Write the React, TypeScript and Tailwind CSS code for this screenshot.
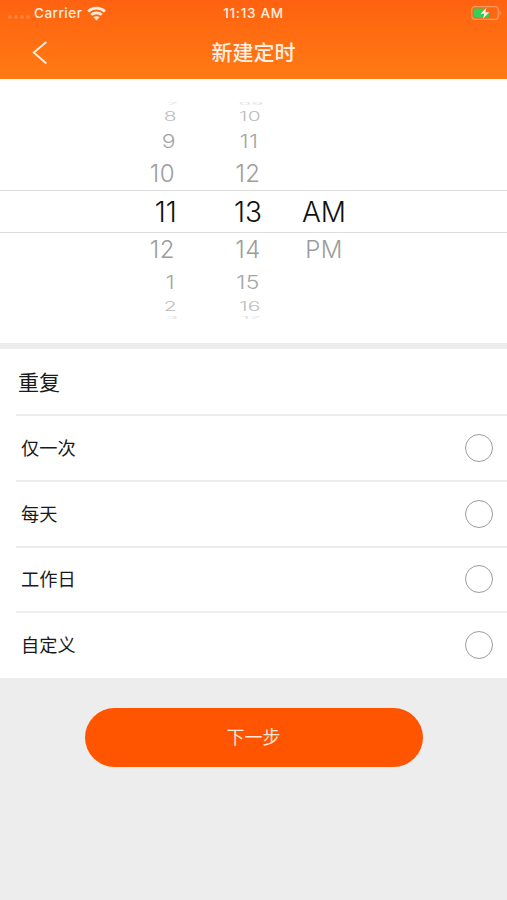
import React, { useState } from 'react';

interface WheelRow {
  hour: string;
  minute: string;
  period?: string;
  row: string;
  text: string;
}

const wheelRows: WheelRow[] = [
  { hour: '7', minute: '09', row: 'h-[7px] pl-[3px]', text: 'text-[20px] text-[#e2e2e2] scale-y-[0.2]' },
  { hour: '8', minute: '10', row: 'h-[19px] pl-[2px]', text: 'text-[21px] text-[#bcbcbc] scale-y-[0.6] tracking-[0.3px] font-light' },
  { hour: '9', minute: '11', row: 'h-[31px] pl-px', text: 'text-[23px] text-[#a6a6a6] scale-y-[0.84] tracking-[0.4px] font-light' },
  { hour: '10', minute: '12', row: 'h-[33px]', text: 'text-[24px] text-[#9c9c9c] tracking-[0.5px] font-light' },
  { hour: '11', minute: '13', period: 'AM', row: 'h-[43px] border-y border-[#dcdcdc] pt-px', text: 'text-[28px] text-[#111111] tracking-[0.1px] font-light' },
  { hour: '12', minute: '14', period: 'PM', row: 'h-[33px]', text: 'text-[24px] text-[#9c9c9c] tracking-[0.5px] font-light' },
  { hour: '1', minute: '15', row: 'h-[33px]', text: 'text-[23px] text-[#a6a6a6] scale-y-[0.84] tracking-[0.4px] font-light' },
  { hour: '2', minute: '16', row: 'h-[15px] pl-[2px]', text: 'text-[21px] text-[#bcbcbc] scale-y-[0.6] tracking-[0.3px] font-light' },
  { hour: '3', minute: '17', row: 'h-[7px] pl-[3px]', text: 'text-[20px] text-[#e2e2e2] scale-y-[0.2]' },
];

const repeatOptions = ['仅一次', '每天', '工作日', '自定义'];

const StatusBar: React.FC = () => (
  <div className="grid h-[26px] grid-cols-3 items-center text-[13px] font-medium text-[#ffeee0]">
    <div className="flex items-center pl-2">
      <div className="mt-2 flex gap-[2px]">
        {[0, 1, 2, 3].map(i => (
          <span key={i} className="h-[4px] w-[4px] rounded-full bg-[#ff8038]"></span>
        ))}
      </div>
      <span className="ml-1 pt-px text-[13.5px] tracking-[0.5px]">Carrier</span>
      <svg className="ml-[5px]" width="19" height="15" viewBox="0 0 19 15" fill="none" stroke="currentColor" strokeWidth="2.7">
        <path d="M1.1 5.4C5.8 1.1 13.2 1.1 17.9 5.4" />
        <path d="M4.2 8.8c2.9-2.7 7.7-2.7 10.6 0" />
        <path d="M6.4 11.3c1.7-1.5 4.5-1.5 6.2 0L9.5 14.5z" fill="currentColor" stroke="none" />
      </svg>
    </div>
    <span className="whitespace-nowrap pt-px text-center text-[13.5px] tracking-[0.7px]">11:13 AM</span>
    <svg className="mr-[5px] justify-self-end" width="31" height="16" viewBox="0 0 31 16" fill="none">
      <rect x=".7" y="1.7" width="26.6" height="12.6" rx="3" stroke="#ff9c63" strokeWidth="1.2" />
      <path d="M28.6 5.7c1.6.6 1.6 4 0 4.6z" fill="#ff9c63" />
      <path d="M4 3.5h9.2L9.4 9h3l-.6 3.5H4c-1 0-1.5-.6-1.5-1.5V5c0-1 .5-1.5 1.5-1.5z" fill="#35cf55" />
      <path d="M15.5 10l2.6-3h.2v2.5c0 2-.5 3-1.8 3h-2z" fill="#35cf55" />
      <path d="M15.6 2.5L9.5 8.8h3.8l-1.3 5 6.2-6.6h-3.9z" fill="#fff2e6" />
    </svg>
  </div>
);

const App: React.FC = () => {
  const [selected, setSelected] = useState<string | null>(null);

  return (
    <div className="min-h-[900px] w-full overflow-hidden bg-[#ededed] font-['Inter','Noto_Sans_CJK_SC',sans-serif]">
      <header className="h-[79px] bg-linear-to-b from-[#ff6210] to-[#ff7a14]">
        <StatusBar />
        <div className="grid h-[53px] grid-cols-3 items-center text-[#fff0e2]">
          <button className="pl-8">
            <svg width="16" height="24" viewBox="0 0 16 24" fill="none" stroke="currentColor" strokeWidth="1.9">
              <path d="M14.3 1L1.8 11.5l12.5 11" />
            </svg>
          </button>
          <h1 className="text-center text-[21px] font-medium leading-none">新建定时</h1>
        </div>
      </header>

      <section className="h-[264px] bg-white pt-[21px]">
        {wheelRows.map(r => (
          <div key={r.hour} className={`flex items-center ${r.row}`}>
            <span className={`w-[178px] shrink-0 text-right leading-none ${r.text} ${r.period === 'AM' ? 'pr-px' : 'pr-[3px]'}`}>{r.hour}</span>
            <span className={`w-[140px] shrink-0 text-center leading-none ${r.text}`}>{r.minute}</span>
            <span className={`flex w-3 shrink-0 justify-center leading-none ${r.text}`}>{r.period}</span>
          </div>
        ))}
      </section>

      <section className="mt-1.5 h-[329px] bg-white">
        <h2 className="flex h-[65px] items-center pl-[18px] pt-px text-[21px] leading-none text-[#1a1a1a]">重复</h2>
        {repeatOptions.map(option => (
          <button
            key={option}
            onClick={() => setSelected(option)}
            className="ml-4 flex h-[65.75px] w-[491px] items-center justify-between border-t-2 border-[#ededed] pl-[5px] pr-3.5"
          >
            <span className="text-[18.2px] leading-none text-[#1a1a1a]">{option}</span>
            <span className="flex h-7 w-7 items-center justify-center rounded-full border-[1.5px] border-[#9b9b9b]">
              {selected === option && <span className="h-4 w-4 rounded-full bg-[#ff5500]"></span>}
            </span>
          </button>
        ))}
      </section>

      <div className="flex justify-center pt-[30px]">
        <button className="h-[59px] w-[338px] rounded-full bg-[#ff5500] text-[18px] text-[#ffe9d8]">下一步</button>
      </div>
    </div>
  );
};

export default App;
